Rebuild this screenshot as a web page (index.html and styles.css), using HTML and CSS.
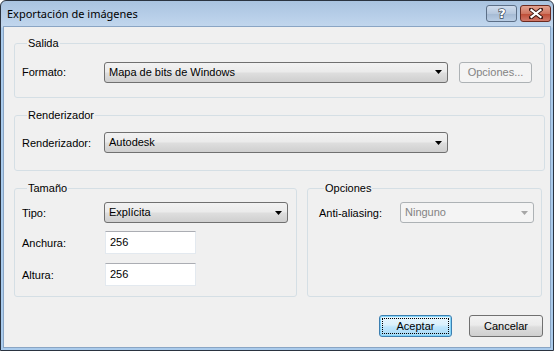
FILE: index.html
```html
<!DOCTYPE html>
<html>
<head>
<meta charset="utf-8">
<link rel="stylesheet" href="styles.css">
</head>
<body>
<div class="window">
  <div class="titlebar">
    <span class="title">Exportación de imágenes</span>
    <div class="caption-buttons">
      <div class="cap-btn help">
        <svg width="12" height="13" viewBox="0 0 12 13"><text x="6" y="11" text-anchor="middle" class="qmark">?</text></svg>
      </div>
      <div class="cap-btn close">
        <svg width="14" height="11" viewBox="0 0 14 11">
          <path d="M2 1.5 L12 9.5 M12 1.5 L2 9.5" stroke="#3a1510" stroke-width="4" stroke-linecap="square"/>
          <path d="M2.5 2 L11.5 9 M11.5 2 L2.5 9" stroke="#ffffff" stroke-width="2.2" stroke-linecap="square"/>
        </svg>
      </div>
    </div>
  </div>
  <div class="client">
    <fieldset class="group g-salida">
      <legend>Salida</legend>
      <div class="row">
        <span class="lbl">Formato:</span>
        <div class="combo w-wide"><span>Mapa de bits de Windows</span><svg class="arrow" width="7" height="4" viewBox="0 0 7 4"><path d="M0 0H7L3.5 4Z" fill="#000"/></svg></div>
        <div class="btn disabled opts">Opciones...</div>
      </div>
    </fieldset>
    <fieldset class="group g-render">
      <legend>Renderizador</legend>
      <div class="row">
        <span class="lbl">Renderizador:</span>
        <div class="combo w-wide"><span>Autodesk</span><svg class="arrow" width="7" height="4" viewBox="0 0 7 4"><path d="M0 0H7L3.5 4Z" fill="#000"/></svg></div>
      </div>
    </fieldset>
    <div class="split">
      <fieldset class="group g-size">
        <legend>Tamaño</legend>
        <div class="row">
          <span class="lbl">Tipo:</span>
          <div class="combo w-mid"><span>Explícita</span><svg class="arrow" width="7" height="4" viewBox="0 0 7 4"><path d="M0 0H7L3.5 4Z" fill="#000"/></svg></div>
        </div>
        <div class="row r-input">
          <span class="lbl">Anchura:</span>
          <div class="textbox">256</div>
        </div>
        <div class="row r-input">
          <span class="lbl">Altura:</span>
          <div class="textbox">256</div>
        </div>
      </fieldset>
      <fieldset class="group g-opts">
        <legend>Opciones</legend>
        <div class="row">
          <span class="lbl lbl-aa">Anti-aliasing:</span>
          <div class="combo combo-disabled w-aa"><span>Ninguno</span><svg class="arrow" width="7" height="4" viewBox="0 0 7 4"><path d="M0 0H7L3.5 4Z" fill="#a6a6a6"/></svg></div>
        </div>
      </fieldset>
    </div>
    <div class="actions">
      <div class="btn default"><span class="focus">Aceptar</span></div>
      <div class="btn cancel">Cancelar</div>
    </div>
  </div>
</div>
</body>
</html>
```

FILE: styles.css
```css
* { box-sizing: border-box; }
html, body { margin: 0; padding: 0; background: #ffffff; }
body {
  font-family: "Liberation Sans", Arial, sans-serif;
  font-size: 11px;
  color: #000;
}
.window {
  width: 554px;
  height: 351px;
  border: 1px solid #2a3340;
  border-radius: 6px 6px 0 0;
  background: linear-gradient(to bottom, #a9c3e0 0px, #c2d7ee 26px, #aacbec 27px, #aacbec 100%);
  display: flex;
  flex-direction: column;
  overflow: hidden;
}
.titlebar {
  height: 25px;
  flex: none;
  display: flex;
  align-items: flex-start;
  justify-content: space-between;
  padding: 0 2px 0 6px;
}
.title {
  font-family: "Noto Sans", sans-serif;
  font-size: 11px;
  line-height: 14px;
  margin-top: 6px;
  color: #000;
}
.caption-buttons {
  display: flex;
  gap: 3px;
  margin-top: 4px;
}
.cap-btn {
  height: 17px;
  border: 1px solid #5c6f87;
  border-radius: 3px;
  display: flex;
  align-items: center;
  justify-content: center;
}
.help {
  width: 31px;
  background: linear-gradient(to bottom, #cfdced 0%, #b6c8de 50%, #a4b9d3 51%, #b9cde4 100%);
}
.close {
  width: 31px;
  border-color: #6b2a20;
  background: linear-gradient(to bottom, #e3a290 0%, #cf7560 50%, #bd4a33 51%, #d1796a 100%);
}
.qmark {
  font-family: "DejaVu Sans", sans-serif;
  font-weight: bold;
  font-size: 13px;
  fill: #ffffff;
  stroke: #3e4a5c;
  stroke-width: 1.4px;
  paint-order: stroke;
}
.client {
  flex: 1;
  margin: 0 2px 2px 2px;
  border: 1px solid #8aa5c4;
  background: #f0f0f0;
  padding: 10px 5px 0 10px;
  display: flex;
  flex-direction: column;
}
.group {
  margin: 0;
  border: 1px solid #d5dfe5;
  border-radius: 3px;
  padding: 0 0 0 7px;
  min-width: 0;
}
.group legend {
  padding: 0 1px;
  margin-left: 5px;
  line-height: 13px;
}
.row {
  display: flex;
  align-items: center;
}
.lbl {
  width: 82px;
  flex: none;
}
.g-salida { height: 61px; padding-top: 11px; }
.g-render { height: 62px; padding-top: 10px; margin-top: 11px; }
.split {
  display: flex;
  gap: 10px;
  margin-top: 11px;
}
.g-size { width: 283px; height: 115px; padding-top: 7px; }
.g-opts { width: 235px; height: 115px; padding-top: 7px; padding-left: 11px; }
.lbl-aa { width: 81px; }
.r-input { margin-top: 8px; }
.r-input + .r-input { margin-top: 9px; }

.combo {
  height: 21px;
  border: 1px solid #707070;
  border-radius: 3px;
  background: linear-gradient(to bottom, #f2f2f2 0%, #ebebeb 45%, #dddddd 55%, #cfcfcf 100%);
  display: flex;
  align-items: center;
  justify-content: space-between;
  padding: 0 5px 0 4px;
  flex: none;
}
.combo span { line-height: 13px; }
.w-wide { width: 344px; }
.w-mid { width: 184px; }
.w-aa { width: 134px; }
.combo-disabled {
  border-color: #adb2b5;
  background: #f4f4f4;
  color: #838383;
}
.textbox {
  width: 91px;
  height: 23px;
  margin-left: 1px;
  background: #ffffff;
  border: 1px solid #e3e9ef;
  border-top-color: #abadb3;
  padding: 4px 0 0 4px;
  line-height: 13px;
}
.btn {
  width: 73px;
  height: 22px;
  border: 1px solid #707070;
  border-radius: 3px;
  background: linear-gradient(to bottom, #f2f2f2 0%, #ebebeb 45%, #dddddd 55%, #cfcfcf 100%);
  display: flex;
  align-items: center;
  justify-content: center;
  flex: none;
  line-height: 13px;
}
.btn.cancel { width: 74px; }
.btn.disabled {
  border-color: #adb2b5;
  background: #f4f4f4;
  color: #838383;
}
.opts { margin-left: 11px; height: 21px; margin-top: 1px; }
.actions {
  display: flex;
  justify-content: flex-end;
  gap: 17px;
  margin-top: 18px;
  padding-right: 2px;
}
.btn.default {
  border-color: #3c7fb1;
  background: linear-gradient(to bottom, #eaf6fd 0%, #d9f0fc 45%, #bee6fd 55%, #a7d9f5 100%);
  box-shadow: inset 0 0 0 1px #84d4f8;
  padding: 2px;
}
.focus {
  flex: 1;
  align-self: stretch;
  border: 1px dotted #000;
  display: flex;
  align-items: center;
  justify-content: center;
}
```
